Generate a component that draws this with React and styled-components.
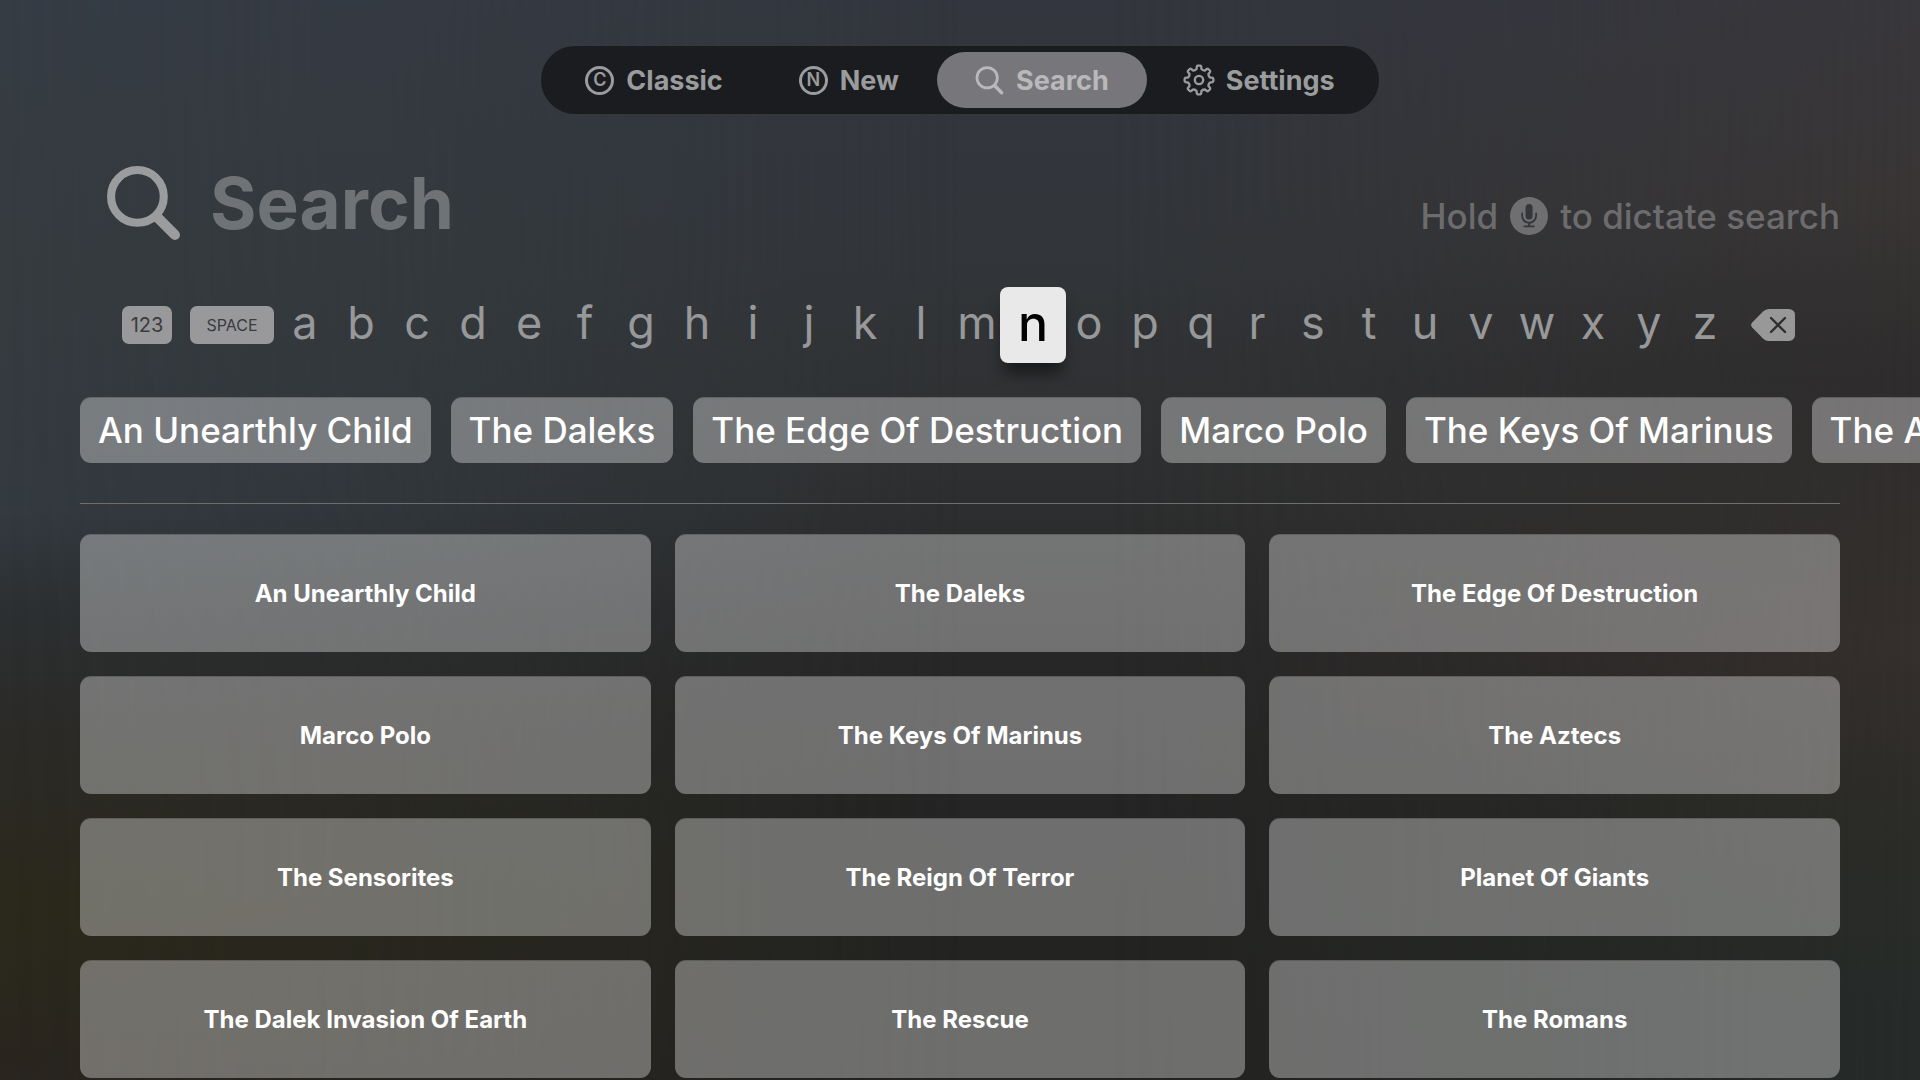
import React, { useState } from 'react';
import styled, { createGlobalStyle, css } from 'styled-components';

const GlobalStyle = createGlobalStyle`
  *, *::before, *::after { box-sizing: border-box; }
  body {
    margin: 0;
    background: #2a2b2b;
    font-family: Inter, "Liberation Sans", sans-serif;
    -webkit-font-smoothing: antialiased;
  }
  button, input { font: inherit; color: inherit; border: 0; margin: 0; padding: 0; background: none; }
`;

const Page = styled.div`
  position: relative;
  isolation: isolate;
  min-height: 100vh;
  overflow: hidden;
  padding-top: 46px;
  background: linear-gradient(180deg, #33363e 0%, #323539 24%, #2e2f30 44%, #272727 61%, #232423 76%, #232321 100%);

  &::before,
  &::after {
    content: '';
    position: absolute;
    inset: 0;
    z-index: -1;
  }
  &::before {
    background: linear-gradient(180deg, #353c45 0%, #353b3e 25%, #333a40 47%, #2c2f31 57%, #2b2a27 68%, #2b291b 84%, #29251f 100%);
    mask-image: linear-gradient(90deg, #000 0%, rgba(0, 0, 0, 0.7) 20%, transparent 50%);
  }
  &::after {
    background: linear-gradient(180deg, #38373b 0%, #393535 18%, #2e2c2c 35%, #322f2d 50%, #352f2d 60%, #2c2c28 75%, #262b29 94%);
    mask-image: linear-gradient(270deg, #000 0%, rgba(0, 0, 0, 0.5) 18%, transparent 42%);
  }
`;

const TabBar = styled.nav`
  display: flex;
  width: fit-content;
  margin: 0 auto;
  padding: 6px;
  border-radius: 34px;
  background: #1a1c1f;
`;

const Tab = styled.button`
  display: flex;
  align-items: center;
  gap: 12px;
  height: 56px;
  padding: 0 38px;
  border-radius: 28px;
  font-size: 27px;
  font-weight: 700;
  color: ${(p) => (p.$active ? '#b9b9bb' : '#9a9c9e')};
  background: ${(p) => (p.$active ? '#77777b' : 'transparent')};

  svg { overflow: visible; }
`;

const Badge = styled.span`
  display: grid;
  place-items: center;
  width: 29px;
  height: 29px;
  border: 3px solid currentColor;
  border-radius: 50%;
  font-size: 18px;
  font-weight: 600;
  line-height: 20px;
`;

const SearchHeader = styled.header`
  display: flex;
  align-items: center;
  gap: 29px;
  padding: 0 80px 0 106px;
  margin-top: 42px;
  height: 94px;
`;

const FieldLabel = styled.label`
  display: flex;
  color: #9b9c9e;
`;

const Field = styled.input`
  flex: 1;
  min-width: 0;
  height: 94px;
  outline: none;
  font-size: 71px;
  font-weight: 700;
  &::placeholder { color: #707376; opacity: 1; }
`;

const Hint = styled.p`
  display: flex;
  align-items: center;
  gap: 12px;
  margin: 26px 0 0;
  font-size: 35px;
  font-weight: 500;
  line-height: 44px;
  color: #6c6c6e;
  white-space: nowrap;
`;

const Keyboard = styled.div`
  display: flex;
  align-items: center;
  height: 76px;
  margin-top: 37px;
  padding: 0 125px 0 122px;
`;

const WordKey = styled.button`
  width: ${(p) => p.$width}px;
  height: 38px;
  margin-right: ${(p) => p.$after}px;
  border-radius: 7px;
  background: #99999b;
  color: #383c40;
  font-size: ${(p) => p.$size}px;
`;

const LetterKey = styled.button`
  flex: 1;
  height: 56px;
  padding-bottom: 4px;
  font-size: 45px;
  line-height: 52px;
  color: #97989a;
  ${(p) =>
    p.$focused &&
    css`
      flex: 0 0 66px;
      height: 76px;
      margin: 0 -5px;
      border-radius: 8px;
      background: #e9e9e9;
      color: #000;
      font-size: 50px;
      font-weight: 500;
      box-shadow: 0 14px 16px -4px rgba(0, 0, 0, 0.5);
    `}
`;

const DeleteKey = styled.button`
  display: flex;
  margin-left: 18px;
  color: #999898;
`;

const Suggestions = styled.div`
  display: flex;
  gap: 20px;
  margin-top: 34px;
  padding-left: 80px;
  overflow: hidden;
`;

const glass = css`
  background: rgba(255, 255, 255, 0.34);
  color: #fff;
  border-radius: 11px;
  box-shadow: inset 0 1px 0 rgba(0, 0, 0, 0.16);
`;

const Chip = styled.button`
  ${glass}
  flex: none;
  height: 66px;
  padding: 0 18px;
  font-size: 35px;
  font-weight: 500;
  white-space: nowrap;
`;

const Divider = styled.hr`
  height: 1px;
  margin: 40px 80px 30px;
  border: 0;
  background: #6c6e6f;
`;

const Results = styled.main`
  display: grid;
  grid-template-columns: repeat(3, 1fr);
  gap: 24px;
  padding: 0 80px;
`;

const Card = styled.button`
  ${glass}
  height: 118px;
  font-size: 24px;
  font-weight: 700;
`;

const Magnifier = ({ size, stroke }) => (
  <svg width={size} height={size} viewBox="0 0 74 74" fill="none" stroke="currentColor" strokeWidth={stroke} strokeLinecap="round" aria-hidden="true">
    <circle cx="31" cy="30" r="26" />
    <path d="M50 50 L68 68" strokeWidth={stroke + 2} />
  </svg>
);

const polar = (radius, degrees) => {
  const a = ((degrees - 90) * Math.PI) / 180;
  return `${(16 + radius * Math.cos(a)).toFixed(2)} ${(16 + radius * Math.sin(a)).toFixed(2)}`;
};

const gearPath =
  Array.from({ length: 8 }, (_, i) => {
    const c = i * 45;
    return `${i ? 'L' : 'M'}${polar(11.4, c - 12)} L${polar(13.2, c - 10)} Q${polar(14.2, c - 9)} ${polar(14.4, c - 5)} L${polar(14.4, c + 5)} Q${polar(14.2, c + 9)} ${polar(13.2, c + 10)} L${polar(11.4, c + 12)} Q${polar(9.9, c + 22.5)} ${polar(11.4, c + 33)}`;
  }).join(' ') + ' Z';

const Gear = () => (
  <svg width="29" height="29" viewBox="2 2 29 29" fill="none" stroke="currentColor" strokeWidth="2.3" strokeLinejoin="round" aria-hidden="true">
    <path d={gearPath} />
    <circle cx="16" cy="16" r="4.2" />
  </svg>
);

const Mic = () => (
  <svg width="38" height="38" viewBox="0 0 38 38" role="img" aria-label="microphone">
    <circle cx="19" cy="19" r="19" fill="#6f6f72" />
    <rect x="15.6" y="7" width="7" height="15.4" rx="3.5" fill="#343639" />
    <path d="M12.1 16.5v2.3a7 7 0 0 0 14 0v-2.3M19.1 25.6v3.6M14.4 29.4h9.4" fill="none" stroke="#343639" strokeWidth="1.8" strokeLinecap="round" />
  </svg>
);

const Backspace = () => (
  <svg width="44" height="32" viewBox="0 0 44 32" aria-hidden="true">
    <path fill="currentColor" d="M18 0H37.500Q44 0 44 6.500V25.500Q44 32 37.500 32H18Q14.500 32 12 29.500L1.200 18.500Q-1 16 1.200 13.500L12 2.500Q14.500 0 18 0Z" />
    <path d="M20 9L34 23M34 9L20 23" stroke="#302f2f" strokeWidth="2.400" strokeLinecap="round" />
  </svg>
);

const tabs = [
  { name: 'Classic', icon: <Badge aria-hidden="true">C</Badge> },
  { name: 'New', icon: <Badge aria-hidden="true">N</Badge> },
  { name: 'Search', icon: <Magnifier size={29} stroke={7} /> },
  { name: 'Settings', icon: <Gear /> },
];

const stories = [
  'An Unearthly Child',
  'The Daleks',
  'The Edge Of Destruction',
  'Marco Polo',
  'The Keys Of Marinus',
  'The Aztecs',
  'The Sensorites',
  'The Reign Of Terror',
  'Planet Of Giants',
  'The Dalek Invasion Of Earth',
  'The Rescue',
  'The Romans',
];

export default function App() {
  const [query, setQuery] = useState('');
  return (
    <Page>
      <GlobalStyle />
      <TabBar>
        {tabs.map((t) => (
          <Tab key={t.name} type="button" $active={t.name === 'Search'}>
            {t.icon}
            {t.name}
          </Tab>
        ))}
      </TabBar>
      <SearchHeader>
        <FieldLabel htmlFor="query" aria-label="Search">
          <Magnifier size={75} stroke={8} />
        </FieldLabel>
        <Field id="query" placeholder="Search" value={query} onChange={(e) => setQuery(e.target.value)} />
        <Hint>
          Hold <Mic /> to dictate search
        </Hint>
      </SearchHeader>
      <Keyboard>
        <WordKey type="button" $width={50} $after={18} $size={20}>123</WordKey>
        <WordKey type="button" $width={84} $after={3} $size={16}>SPACE</WordKey>
        {'abcdefghijklmnopqrstuvwxyz'.split('').map((l) => (
          <LetterKey key={l} type="button" $focused={l === 'n'}>{l}</LetterKey>
        ))}
        <DeleteKey type="button" aria-label="Delete"><Backspace /></DeleteKey>
      </Keyboard>
      <Suggestions>
        {stories.slice(0, 6).map((s) => (
          <Chip key={s} type="button">{s}</Chip>
        ))}
      </Suggestions>
      <Divider />
      <Results>
        {stories.map((s) => (
          <Card key={s} type="button">{s}</Card>
        ))}
      </Results>
    </Page>
  );
}
